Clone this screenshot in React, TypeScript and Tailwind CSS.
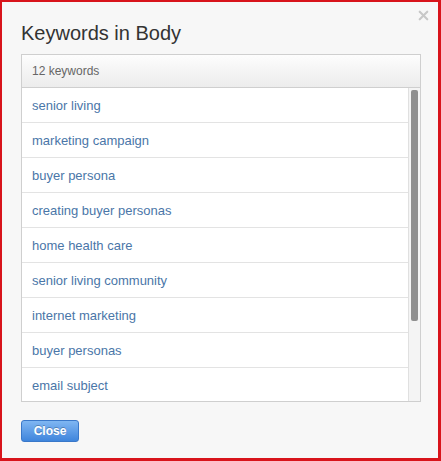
import { X } from "lucide-react";

const keywords = [
  "senior living",
  "marketing campaign",
  "buyer persona",
  "creating buyer personas",
  "home health care",
  "senior living community",
  "internet marketing",
  "buyer personas",
  "email subject",
];

export default function App() {
  return (
    <div
      className="relative h-[461px] w-[441px] border-l-2 border-t-2 border-r-[3px] border-b-[3px] border-[#d8141b] bg-[#f7f7f7]"
      style={{ fontFamily: '"Liberation Sans", Arial, sans-serif' }}
    >
      <div className="absolute right-[7px] top-[6px] text-[#c8c8c8]">
        <X className="h-[15px] w-[15px]" strokeWidth={3.5} />
      </div>
      <div className="flex h-full flex-col pl-[19px] pr-[17px]">
        <h1 className="mt-[19px] text-[20px] leading-[24px] text-[#333]">Keywords in Body</h1>
        <div className="mt-[9px] flex flex-col border border-[#cfcfcf] bg-white">
          <div className="flex h-[33px] items-center border-b border-[#cfcfcf] bg-gradient-to-b from-[#fdfdfd] to-[#ececec] pl-[10px] text-[12px] text-[#666]">
            12 keywords
          </div>
          <div className="flex h-[313px] flex-row overflow-hidden">
            <div className="flex flex-1 flex-col">
              {keywords.map((k) => (
                <div
                  key={k}
                  className="flex h-[35px] shrink-0 items-center border-b border-[#e3e3e3] pl-[10px] pt-[2px] text-[13px] text-[#4a76a8]"
                >
                  {k}
                </div>
              ))}
            </div>
            <div className="flex w-[12px] flex-col border-l border-[#e0e0e0] bg-[#f4f4f4] px-[2px] pt-[2px]">
              <div className="h-[231px] rounded-[2px] bg-[#8f8f8f]" />
            </div>
          </div>
        </div>
        <div className="mt-[16px]">
          <button className="h-[22px] w-[58px] rounded-[3px] border border-[#3a78c9] bg-gradient-to-b from-[#7fb6f2] to-[#3f85dc] text-[12px] font-bold text-white [text-shadow:0_-1px_0_rgba(0,0,0,0.25)]">
            Close
          </button>
        </div>
      </div>
    </div>
  );
}
